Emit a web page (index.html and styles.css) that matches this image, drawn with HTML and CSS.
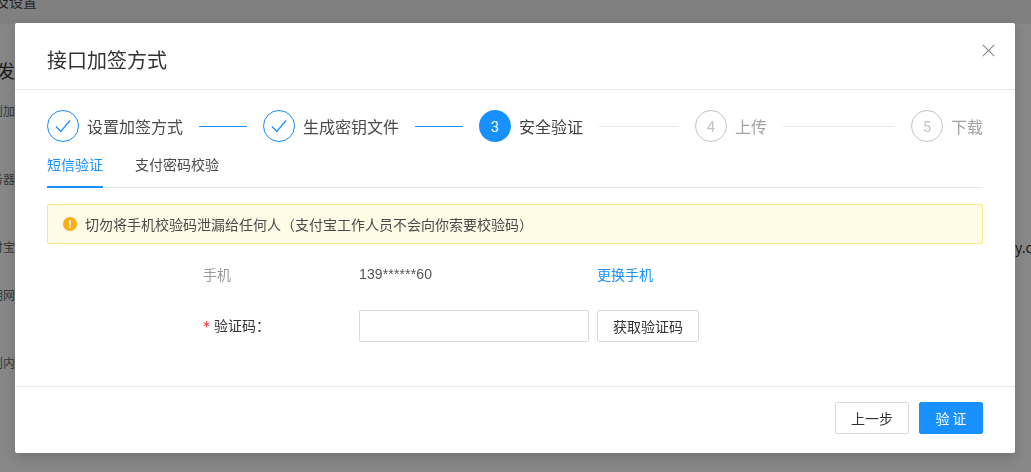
FILE: index.html
```html
<!DOCTYPE html>
<html lang="zh">
<head>
<meta charset="utf-8">
<title>接口加签方式</title>
<link rel="stylesheet" href="styles.css">
</head>
<body>
<div class="page">
  <div class="topbar"><span class="bg-title">及设置</span></div>
  <div class="bg-heading">发信</div>
  <div class="bg-line l1">则加</div>
  <div class="bg-line l2">务器</div>
  <div class="bg-line l3 with-right"><span>付宝</span><span class="bg-right">y.c</span></div>
  <div class="bg-line l4">期网</div>
  <div class="bg-line l5">则内</div>
</div>
<div class="mask"></div>
<div class="modal">
  <header class="modal-header">
    <h1 class="modal-title">接口加签方式</h1>
    <svg class="close" width="13" height="13" viewBox="0 0 13 13"><path d="M.8.8l11.4 11.4M12.2.8L.8 12.2" fill="none" stroke="#8c8c8c" stroke-width="1.2"/></svg>
  </header>
  <div class="modal-body">
    <ol class="steps">
      <li class="step done">
        <span class="dot"><svg width="16" height="14" viewBox="0 0 16 14"><path d="M1 7.5l4.8 5L15 1.5" fill="none" stroke="#1890ff" stroke-width="1.2"/></svg></span>
        <span class="step-label">设置加签方式</span>
        <span class="bar on"></span>
      </li>
      <li class="step done">
        <span class="dot"><svg width="16" height="14" viewBox="0 0 16 14"><path d="M1 7.5l4.8 5L15 1.5" fill="none" stroke="#1890ff" stroke-width="1.2"/></svg></span>
        <span class="step-label">生成密钥文件</span>
        <span class="bar on"></span>
      </li>
      <li class="step active">
        <span class="dot">3</span>
        <span class="step-label">安全验证</span>
        <span class="bar"></span>
      </li>
      <li class="step todo">
        <span class="dot">4</span>
        <span class="step-label">上传</span>
        <span class="bar"></span>
      </li>
      <li class="step todo last">
        <span class="dot">5</span>
        <span class="step-label">下载</span>
      </li>
    </ol>
    <nav class="tabs">
      <a class="tab current">短信验证</a>
      <a class="tab">支付密码校验</a>
    </nav>
    <div class="alert">
      <svg class="alert-icon" width="14" height="14" viewBox="0 0 14 14"><circle cx="7" cy="7" r="7" fill="#faad14"/><rect x="6.2" y="3" width="1.6" height="5.4" rx=".6" fill="#fff"/><circle cx="7" cy="10.3" r=".95" fill="#fff"/></svg>
      <span>切勿将手机校验码泄漏给任何人（支付宝工作人员不会向你索要校验码）</span>
    </div>
    <div class="form">
      <div class="row row-phone">
        <div class="label muted">手机</div>
        <div class="value">139******60</div>
        <a class="link">更换手机</a>
      </div>
      <div class="row row-code">
        <label class="label"><span class="req">*</span>验证码：</label>
        <input class="input" type="text">
        <button class="btn btn-code" type="button">获取验证码</button>
      </div>
    </div>
  </div>
  <footer class="modal-footer">
    <button class="btn btn-prev" type="button">上一步</button>
    <button class="btn btn-primary" type="button">验 证</button>
  </footer>
</div>
</body>
</html>
```
FILE: styles.css
```css
* { box-sizing: border-box; }
html, body { margin: 0; height: 100%; overflow: hidden; }
body {
  background: #fff;
  color: #333;
  font-family: "Noto Sans CJK SC", "Liberation Sans", sans-serif;
  font-size: 14px;
}
.page { height: 472px; overflow: hidden; }
.topbar { height: 24px; background: #f2f2f2; overflow: hidden; }
.bg-title { display: block; width: 37px; margin-top: -9px; line-height: 20px; white-space: nowrap; direction: rtl; color: #444; }
.bg-heading { margin: 34px 0 0 -3px; font-size: 18px; line-height: 24px; white-space: nowrap; color: #333; }
.bg-line { display: flex; justify-content: flex-end; width: 15px; font-size: 12px; line-height: 20px; white-space: nowrap; color: #666; }
.l1 { margin-top: 19px; }
.l2 { margin-top: 48px; }
.l3 { margin-top: 48px; }
.l4 { margin-top: 28px; }
.l5 { margin-top: 48px; }
.with-right { position: relative; }
.bg-right { position: absolute; left: 1015px; top: 0; font-size: 14px; color: #333; }
.mask { position: fixed; inset: 0; background: rgba(0, 0, 0, .47); }
.modal {
  position: absolute;
  left: 15px;
  top: 23px;
  width: 1000px;
  height: 430px;
  background: #fff;
  border-radius: 2px;
  box-shadow: 0 4px 12px rgba(0, 0, 0, .15);
  display: flex;
  flex-direction: column;
}
.modal-header {
  height: 67px;
  flex: none;
  padding: 8px 32px 0;
  border-bottom: 1px solid #e8e8e8;
  display: flex;
  align-items: center;
  justify-content: space-between;
}
.modal-title { margin: 0; font-size: 20px; font-weight: 400; line-height: 28px; color: #333; }
.close { position: absolute; right: 20px; top: 21px; }
.modal-body { flex: 1; padding: 20px 32px 0; }
.steps { list-style: none; margin: 0; padding: 0; display: flex; height: 32px; }
.step { display: flex; align-items: center; flex: 1 1 0; }
.step.last { flex: none; }
.dot {
  width: 32px;
  height: 32px;
  flex: none;
  padding-top: 2px;
  border-radius: 50%;
  display: flex;
  align-items: center;
  justify-content: center;
  font-size: 15px;
  font-family: Roboto, "Liberation Sans", sans-serif;
}
.step-label { margin-left: 8px; flex: none; font-size: 16px; line-height: 24px; color: #4a4a4a; }
.done .dot { border: 1px solid #1890ff; padding-top: 0; }
.active .dot { background: #1890ff; color: #fff; }
.active .step-label { color: #444; }
.todo .dot { border: 1px solid #c4c4c4; color: #c4c4c4; }
.todo .step-label { color: #a3a3a3; }
.bar { flex: 1; height: 1px; margin: 0 16px; background: #e8e8e8; }
.bar.on { background: #1890ff; }
.tabs { display: flex; gap: 32px; height: 46px; border-bottom: 1px solid #e8e8e8; }
.tab { height: 46px; padding-top: 11px; line-height: 22px; font-size: 14px; color: #4a4a4a; }
.tab.current { color: #1890ff; border-bottom: 2px solid #1890ff; }
.alert {
  height: 40px;
  margin-top: 16px;
  padding-left: 15px;
  display: flex;
  align-items: center;
  gap: 8px;
  background: #fffbe6;
  border: 1px solid #ffe58f;
  border-radius: 2px;
  font-size: 14px;
  color: #4a4a4a;
}
.form { padding-left: 156px; }
.row { display: flex; }
.row-phone { margin-top: 19px; height: 22px; align-items: center; }
.row-code { margin-top: 25px; height: 32px; align-items: center; }
.label { width: 156px; flex: none; color: #333; }
.row-code .label { padding-bottom: 2px; }
.muted { color: #999; }
.req { color: #f5222d; margin-right: 4px; font-family: "DejaVu Sans", sans-serif; }
.value { width: 238px; flex: none; color: #555; font-family: "Liberation Sans", sans-serif; font-size: 14px; letter-spacing: .13px; }
.link { color: #1890ff; }
.input { width: 230px; height: 32px; border: 1px solid #d9d9d9; border-radius: 2px; background: #fff; outline: none; }
.btn {
  height: 32px;
  padding: 0;
  font: inherit;
  color: #333;
  background: #fff;
  border: 1px solid #d9d9d9;
  border-radius: 2px;
}
.btn-code { width: 102px; margin-left: 8px; }
.modal-footer {
  height: 67px;
  flex: none;
  border-top: 1px solid #e8e8e8;
  padding: 15px 32px 0;
  display: flex;
  justify-content: flex-end;
  gap: 10px;
}
.btn-prev { width: 74px; }
.btn-primary { width: 64px; background: #1890ff; border-color: #1890ff; color: #fff; }
```
